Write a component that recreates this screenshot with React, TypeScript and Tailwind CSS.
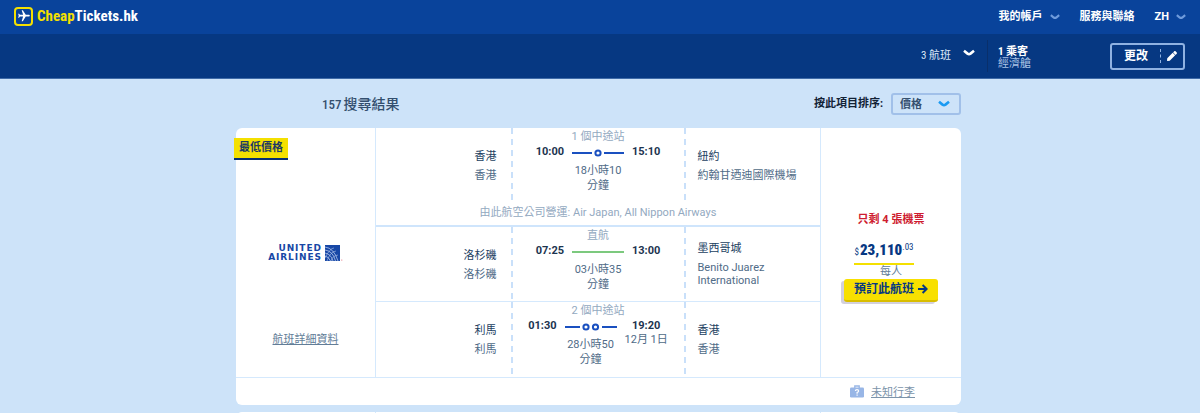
import React from "react";
import { MdFlight } from "react-icons/md";
import { FaPen } from "react-icons/fa";

const narrow = "font-['Roboto_Condensed','Noto_Sans_CJK_TC',sans-serif]";

type Leg = {
  from: string;
  fromAirport: string;
  to: string;
  toAirport: string;
  depart: string;
  arrive: string;
  arriveDate?: string;
  stopsLabel: string;
  stops: number;
  duration: string;
  operatedBy?: string;
};

const legs: Leg[] = [
  {
    from: "香港",
    fromAirport: "香港",
    to: "紐約",
    toAirport: "約翰甘迺迪國際機場",
    depart: "10:00",
    arrive: "15:10",
    stopsLabel: "1 個中途站",
    stops: 1,
    duration: "18小時10",
    operatedBy: "由此航空公司營運: Air Japan, All Nippon Airways",
  },
  {
    from: "洛杉磯",
    fromAirport: "洛杉磯",
    to: "墨西哥城",
    toAirport: "Benito Juarez International",
    depart: "07:25",
    arrive: "13:00",
    stopsLabel: "直航",
    stops: 0,
    duration: "03小時35",
  },
  {
    from: "利馬",
    fromAirport: "利馬",
    to: "香港",
    toAirport: "香港",
    depart: "01:30",
    arrive: "19:20",
    arriveDate: "12月 1日",
    stopsLabel: "2 個中途站",
    stops: 2,
    duration: "28小時50",
  },
];

function Chevron({ className }: { className: string }) {
  return (
    <svg viewBox="0 0 12 8" fill="none" stroke="currentColor" className={className} aria-hidden="true">
      <path d="M1 1.800L4.500 4.600Q6 5.600 7.500 4.600L11 1.800" strokeWidth="2.600" />
    </svg>
  );
}

function DashedLine() {
  return <div className="bg-[repeating-linear-gradient(to_bottom,#c9e0fa_0px_6px,transparent_6px_11px)]" />;
}

function Track({ stops }: { stops: number }) {
  return (
    <svg width="52" height="14" viewBox="0 0 52 14" fill="none" className="block" aria-hidden="true">
      {stops === 0 && <path d="M0 8H52" stroke="#7cc97e" strokeWidth="2" />}
      {stops === 1 && (
        <g stroke="#1a50c0" strokeWidth="2">
          <path d="M0 8H20M32 8H52" />
          <circle cx="26" cy="8" r="2.6" />
        </g>
      )}
      {stops === 2 && (
        <g stroke="#1a50c0" strokeWidth="2">
          <path d="M0 8H15M37 8H52" />
          <circle cx="21" cy="8" r="2.6" />
          <circle cx="30.500" cy="8" r="2.6" />
        </g>
      )}
    </svg>
  );
}

function Place({ city, airport, right }: { city: string; airport: string; right?: boolean }) {
  return (
    <div className={right ? "flex flex-col justify-center pr-3.5 text-right" : "flex flex-col justify-center pr-4 pl-3"}>
      <div className="leading-5 text-[#22405f]">{city}</div>
      <div className="py-0.5 leading-[13px] text-[#4f6b87]">{airport}</div>
    </div>
  );
}

function LegRow({ leg }: { leg: Leg }) {
  return (
    <section className={leg.operatedBy ? "border-b-2 border-[#cfe5fc]" : "border-b border-[#d5e9fd] last:border-b-0 last:pb-px"}>
      <div className="grid min-h-[74px] grid-cols-[1fr_2px_171px_2px_1fr]">
        <Place city={leg.from} airport={leg.fromAirport} right />
        <DashedLine />
        <div>
          <div className="text-center leading-[17px] text-[#93a9bf]">{leg.stopsLabel}</div>
          <div className="flex justify-center gap-2 leading-[14px]">
            <div className="font-bold text-[#1c3450]">{leg.depart}</div>
            <div className="w-[52px]">
              <Track stops={leg.stops} />
              <div className="mt-1 text-center leading-[15px] whitespace-nowrap text-[#4f6b87]">
                {leg.duration}
                <br />
                分鐘
              </div>
            </div>
            <div className="text-center">
              <div className="font-bold text-[#1c3450]">{leg.arrive}</div>
              {leg.arriveDate && <div className="text-[#4f6b87]">{leg.arriveDate}</div>}
            </div>
          </div>
        </div>
        <DashedLine />
        <Place city={leg.to} airport={leg.toAirport} />
      </div>
      {leg.operatedBy && <div className="pt-px pb-0.5 text-center leading-5 text-[#93a9bf]">{leg.operatedBy}</div>}
    </section>
  );
}

function AirlineLogo() {
  return (
    <div className="flex items-center gap-[3px] font-['DejaVu_Sans',sans-serif] text-[#1747a6]" aria-label="United Airlines">
      <div className="text-right text-[9px] leading-[9px] font-bold tracking-widest">
        <div>UNITED</div>
        <div>AIRLINES</div>
      </div>
      <svg width="18" height="16" viewBox="0 0 18 16" aria-hidden="true">
        <rect width="15" height="16" fill="#1747a6" />
        <g fill="none" stroke="#c5d6f3" strokeWidth=".7">
          <path d="M0 2Q9 3 13 16M0 5Q8 6 10.500 16M0 8Q6 9 8 16M0 11Q4 12 5.500 16" />
          <path d="M0 13Q5 3 9 3M2 16Q5 7 11 6M6 16Q7 11 13 10" strokeWidth=".5" />
        </g>
        <circle cx="16.800" cy="15" r=".6" fill="#df6474" />
      </svg>
    </div>
  );
}

function BagIcon() {
  return (
    <svg width="14" height="13" viewBox="0 0 14 13" aria-hidden="true">
      <path d="M4.800 3V1H9.200V3" fill="none" stroke="#98b6e6" strokeWidth="1.300" />
      <rect y="2.500" width="14" height="10" rx="1.200" fill="#98b6e6" />
      <path d="M5.400 6Q5.500 4.600 7 4.600Q8.600 4.600 8.600 6Q8.600 6.900 7.100 7.500V8.700M7.100 9.600V10.800" fill="none" stroke="#fff" strokeWidth="1.200" />
    </svg>
  );
}

export default function App() {
  return (
    <div className="h-screen overflow-hidden bg-[#cde3f9] font-[Roboto,'Noto_Sans_CJK_TC',sans-serif] text-[11px]">
      <header className="flex h-[34px] items-center justify-between bg-[#09439b] px-3.5 text-white">
        <a href="#" className="flex items-center gap-1 pb-0.5">
          <span className="flex size-[19px] items-center justify-center rounded-sm border-2 border-[#f4e000]">
            <MdFlight className="size-3.5 rotate-90" />
          </span>
          <span className={`${narrow} text-[15px] font-bold`}>
            <span className="text-[#f4e000]">Cheap</span>Tickets.hk
          </span>
        </a>
        <nav className="flex items-center font-bold">
          <button className="mr-5 flex items-center gap-[7px]">
            我的帳戶
            <Chevron className="h-2 w-2.5 text-[#6f9bdc]" />
          </button>
          <a href="#" className="mr-5">服務與聯絡</a>
          <button className="flex items-center gap-[7px]">
            ZH
            <Chevron className="h-2 w-2.5 text-[#6f9bdc]" />
          </button>
        </nav>
      </header>

      <div className="flex h-[45px] items-center justify-end border-b border-[#3f6ba8] bg-[#063882] pr-[15px] text-white">
        <button className={`mr-3 flex items-center gap-3 text-[#dbe7f7] ${narrow}`}>
          3 航班
          <Chevron className="mb-1.5 h-2 w-3 text-white" />
        </button>
        <div className={`mr-[79px] flex h-8 flex-col justify-center border-l border-[#092f6b] pt-1 pl-2.5 leading-3 ${narrow}`}>
          <div className="font-bold">1 乘客</div>
          <div className="text-[#a9c2e5]">經濟艙</div>
        </div>
        <button className="flex h-[27px] items-center rounded-[3px] border-2 border-[#8fb2e2] pr-1.5 pl-3 text-xs font-bold">
          更改
          <span className="mr-1.5 ml-3 h-3.5 border-l border-dashed border-[#8fb2e2]" />
          <FaPen className="size-2.5" />
        </button>
      </div>

      <main className="mx-auto w-full max-w-[728px] pr-[3px]">
        <div className="flex h-[49px] items-center justify-between pl-[86px]">
          <h1 className="flex items-baseline gap-0.5 pt-0.5 text-sm font-medium text-[#334f6e]">
            <span className={`${narrow} text-[13px]`}>157</span>
            <span>搜尋結果</span>
          </h1>
          <div className="flex items-center gap-2">
            <label htmlFor="sort" className="pt-0.5 font-bold text-[#122236]">按此項目排序:</label>
            <div className="relative">
              <select id="sort" className="block h-[22px] w-[70px] appearance-none rounded-[3px] border-2 border-[#a1c0e9] bg-transparent pt-0.5 pl-[7px] leading-4 font-bold text-[#35506f]">
                <option>價格</option>
              </select>
              <Chevron className="pointer-events-none absolute top-[7px] right-[11px] h-2 w-3 text-[#1a9af2]" />
            </div>
          </div>
        </div>

        <article className="rounded-md bg-white">
          <div className="grid grid-cols-[139px_1fr_140px] border-b border-[#d5e9fd]">
            <div className="relative flex flex-col items-center justify-between pt-[116px] pb-7">
              <div className="absolute top-2.5 -left-0.5 border-b-2 border-[#062e72] bg-[#f4e000] px-[5px] leading-[20px] font-bold text-[#1d3a63]">
                最低價格
              </div>
              <AirlineLogo />
              <a href="#" className="leading-[18px] text-[#627d97] underline underline-offset-1">航班詳細資料</a>
            </div>
            <div className="border-x border-[#d5e9fd]">
              {legs.map((leg) => (
                <LegRow key={leg.depart} leg={leg} />
              ))}
            </div>
            <div className="flex flex-col items-center pt-[83px]">
              <div className="leading-[18px] font-bold text-[#ce1c30]">只剩 4 張機票</div>
              <div className={`mt-2.5 mr-3.5 flex items-start border-b-2 border-[#f4e000] leading-[22px] text-[#063882] ${narrow}`}>
                <span className="pt-0.5 pr-px text-[9px]">$</span>
                <span className="text-[15px] font-black">23,110</span>
                <span className="text-[9px] leading-4">.03</span>
              </div>
              <div className="leading-[14px] text-[#627d97]">每人</div>
              <button className="flex h-[23px] items-center gap-1 rounded-[3px] border-b-2 border-[#d9bd00] bg-[#f8e000] px-2.5 pb-0.5 text-xs font-bold text-[#063882] shadow-[-3px_2px_0_#d3d0dc]">
                預訂此航班
                <svg width="10" height="10" viewBox="0 0 10 10" fill="none" stroke="currentColor" strokeWidth="2" aria-hidden="true">
                  <path d="M0 5H8M4.600 1L8.600 5L4.600 9" />
                </svg>
              </button>
            </div>
          </div>
          <footer className="flex h-[27px] items-center justify-end gap-[7px] pr-[46px]">
            <BagIcon />
            <a href="#" className="mt-1 text-[#7c94aa] underline underline-offset-1">未知行李</a>
          </footer>
        </article>

        <article className="mt-[7px] grid h-5 grid-cols-[139px_1fr_140px] rounded-md bg-white">
          <div />
          <div className="border-x border-[#d5e9fd]" />
          <div />
        </article>
      </main>
    </div>
  );
}
